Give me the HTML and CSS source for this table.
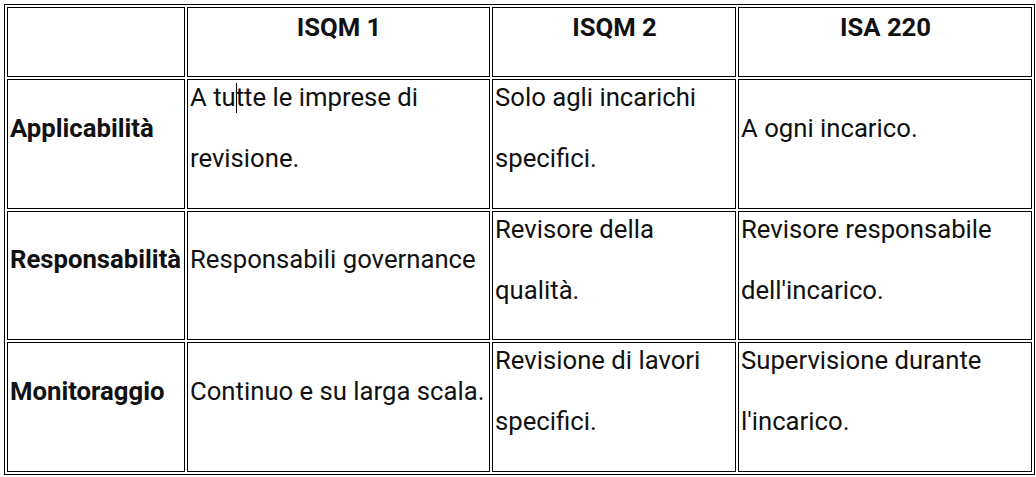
FILE: index.html
```html
<!DOCTYPE html>
<html lang="it">
<head>
<meta charset="utf-8">
<title>ISQM 1, ISQM 2, ISA 220</title>
<link rel="stylesheet" href="styles.css">
</head>
<body>
<div class="page">
<table class="cmp">
  <colgroup>
    <col class="c1"><col class="c2"><col class="c3"><col class="c4">
  </colgroup>
  <tr class="r-head">
    <th></th>
    <th><span class="t">ISQM 1</span></th>
    <th><span class="t">ISQM 2</span></th>
    <th><span class="t">ISA 220</span></th>
  </tr>
  <tr class="r-body">
    <th class="rh"><span class="t">Applicabilità</span></th>
    <td><span class="t">A tu<span class="caret"></span>tte le imprese di revisione.</span></td>
    <td><span class="t">Solo agli incarichi specifici.</span></td>
    <td><span class="t">A ogni incarico.</span></td>
  </tr>
  <tr class="r-body r-mid">
    <th class="rh"><span class="t">Responsabilità</span></th>
    <td><span class="t">Responsabili governance</span></td>
    <td><span class="t">Revisore della qualità.</span></td>
    <td><span class="t">Revisore responsabile dell'incarico.</span></td>
  </tr>
  <tr class="r-body">
    <th class="rh"><span class="t">Monitoraggio</span></th>
    <td><span class="t">Continuo e su larga scala.</span></td>
    <td><span class="t">Revisione di lavori specifici.</span></td>
    <td><span class="t">Supervisione durante l'incarico.</span></td>
  </tr>
</table>
</div>
</body>
</html>
```

FILE: styles.css
```css
html, body {
  margin: 0;
  padding: 0;
  background: #fff;
}

.page {
  padding: 4px;
}

.cmp {
  table-layout: fixed;
  width: 1031px;
  border-collapse: separate;
  border-spacing: 2px;
  border: 1px solid #000;
  font-family: Roboto, "Liberation Sans", sans-serif;
  font-size: 25.7px;
  color: #111;
}

.c1 { width: 178px; }
.c2 { width: 303px; }
.c3 { width: 244px; }
.c4 { width: 294px; }

.cmp th,
.cmp td {
  border: 1px solid #000;
  padding: 1px 1px 1px 2px;
  line-height: 61px;
  vertical-align: middle;
  text-align: left;
  font-weight: 400;
}

.cmp .r-head th {
  text-align: center;
  font-weight: 700;
  vertical-align: top;
  padding-top: 5px;
}

.cmp .rh {
  font-weight: 700;
  padding-left: 2px;
}

.r-head { height: 70px; }
.r-body { height: 130px; }
.r-mid { height: 129px; }

.t {
  line-height: 28px;
  vertical-align: top;
}

.caret {
  display: inline-block;
  width: 1px;
  height: 30px;
  margin-right: -1px;
  background: #000;
  vertical-align: top;
}
```
